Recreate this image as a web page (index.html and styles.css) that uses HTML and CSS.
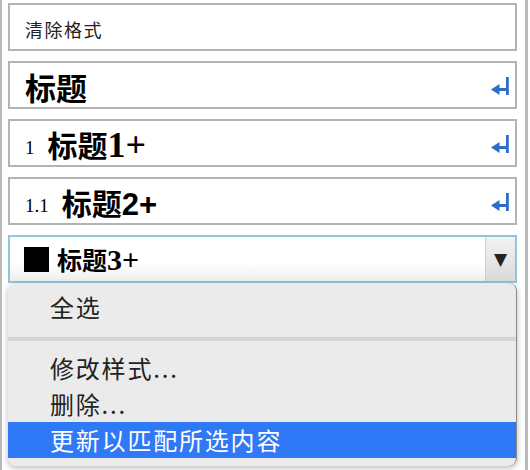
FILE: index.html
```html
<!DOCTYPE html>
<html lang="zh-CN">
<head>
  <meta charset="UTF-8" />
  <title>样式</title>
  <link rel="stylesheet" href="styles.css">
</head>
<body>
  <div class="panel">
    <div class="row">
      <span class="plain">清除格式</span>
    </div>
    <div class="row">
      <span class="h0">标题</span>
      <svg class="ret" width="18" height="20" viewBox="0 0 18 20"><rect x="15" y="1" width="2.8" height="18" fill="#2c6ccb"/><rect x="7" y="12" width="9" height="3" fill="#2c6ccb"/><polygon points="0,13.5 8.5,8 8.5,19" fill="#2c6ccb"/></svg>
    </div>
    <div class="row">
      <span class="num">1</span><span class="h1">标题<span class="serif">1+</span></span>
      <svg class="ret" width="18" height="20" viewBox="0 0 18 20"><rect x="15" y="1" width="2.8" height="18" fill="#2c6ccb"/><rect x="7" y="12" width="9" height="3" fill="#2c6ccb"/><polygon points="0,13.5 8.5,8 8.5,19" fill="#2c6ccb"/></svg>
    </div>
    <div class="row">
      <span class="num">1.1</span><span class="h2">标题<span class="sans">2+</span></span>
      <svg class="ret" width="18" height="20" viewBox="0 0 18 20"><rect x="15" y="1" width="2.8" height="18" fill="#2c6ccb"/><rect x="7" y="12" width="9" height="3" fill="#2c6ccb"/><polygon points="0,13.5 8.5,8 8.5,19" fill="#2c6ccb"/></svg>
    </div>
    <div class="select">
      <span class="swatch"></span>
      <span class="h3">标题<span class="serif">3+</span></span>
      <span class="drop">&#9660;</span>
    </div>
    <div class="row"></div>
    <div class="row"></div>
    <div class="row"></div>

    <div class="menu">
      <div class="item">全选</div>
      <div class="sep"></div>
      <div class="item">修改样式...</div>
      <div class="item">删除...</div>
      <div class="item active">更新以匹配所选内容</div>
    </div>
  </div>
</body>
</html>
```

FILE: styles.css
```css
html, body {
  margin: 0;
  height: 470px;
  overflow: hidden;
  background: #fff;
}

.panel {
  position: relative;
  width: 528px;
  height: 470px;
  box-sizing: border-box;
  border-left: 2px solid #b9b9b9;
  border-right: 3px solid #b9b9b9;
  padding: 3px 8px 0 6px;
  display: flex;
  flex-direction: column;
  gap: 10px;
  font-family: "Liberation Serif", "Noto Sans CJK SC", serif;
  color: #000;
}

.row {
  flex: none;
  height: 48px;
  box-sizing: border-box;
  border: 2px solid #b4b4b4;
  background: #fff;
  display: flex;
  align-items: center;
  padding: 2px 6px 0 15px;
}

.plain {
  font-family: "Noto Sans CJK SC", sans-serif;
  font-size: 18px;
  color: #222;
  letter-spacing: 1.5px;
  padding-top: 2px;
}

.h0 {
  font-family: "Noto Sans CJK SC", serif;
  font-size: 31px;
  font-weight: 700;
}

.num {
  font-size: 19px;
  margin-right: 13px;
  padding-top: 8px;
}

.h1, .h2 {
  font-family: "Noto Sans CJK SC", serif;
  font-size: 30px;
  font-weight: 700;
}

.h1 .serif {
  font-family: "Liberation Serif", serif;
  font-size: 36px;
}

.h2 .sans {
  font-family: "Liberation Sans", sans-serif;
  font-size: 31px;
}

.ret {
  margin-left: auto;
  flex: none;
}

.select {
  flex: none;
  height: 48px;
  box-sizing: border-box;
  border: 2px solid #92c4dc;
  background: linear-gradient(#fff 60%, #eeeeee);
  display: flex;
  align-items: center;
  padding-left: 14px;
}

.swatch {
  width: 25px;
  height: 25px;
  background: #000;
  margin-right: 8px;
}

.h3 {
  font-family: "Noto Sans CJK SC", serif;
  font-size: 25px;
  font-weight: 700;
}

.h3 .serif {
  font-family: "Liberation Serif", serif;
  font-size: 30px;
}

.drop {
  margin-left: auto;
  align-self: stretch;
  width: 29px;
  border-left: 1px solid #cfcfcf;
  background: linear-gradient(#f2f2f2, #dadada);
  display: flex;
  align-items: center;
  justify-content: center;
  font-family: "DejaVu Sans", sans-serif;
  font-size: 17px;
  color: #222;
}

.menu {
  position: absolute;
  top: 283px;
  left: 6px;
  width: 509px;
  box-sizing: border-box;
  padding: 6px 0 8px;
  background: #ebebeb;
  border-radius: 8px;
  border-right: 1px solid #8a8a8a;
  box-shadow: 0 2px 6px rgba(0, 0, 0, 0.28);
  font-family: "Noto Sans CJK SC", sans-serif;
  font-size: 24px;
  letter-spacing: 1.8px;
  color: #222;
}

.item {
  height: 36px;
  line-height: 36px;
  padding-left: 42px;
}

.sep {
  height: 4px;
  margin: 12px 0 9px;
  background: #d5d5d5;
}

.active {
  background: #2f79f6;
  color: #fff;
}
```
